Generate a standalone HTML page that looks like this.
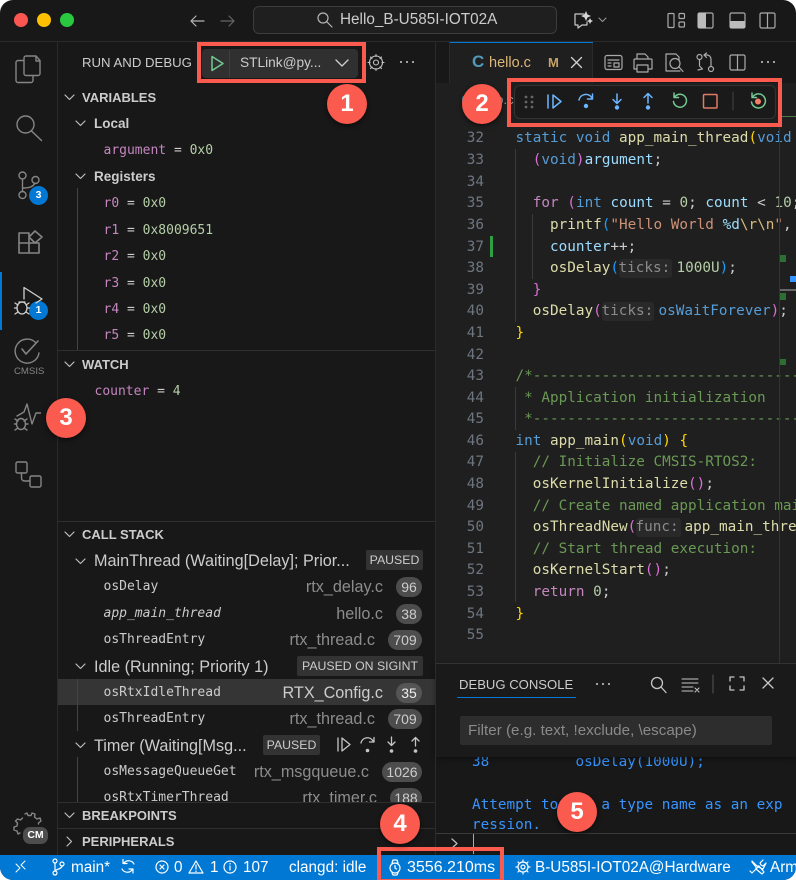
<!DOCTYPE html>
<html><head><meta charset="utf-8"><style>
html,body{margin:0;padding:0;background:#fff}
#w{position:relative;width:796px;height:880px;overflow:hidden;background:#181818;border-radius:13px;font-family:"Liberation Sans",sans-serif;color:#ccc}
#w div{position:absolute}
.t{white-space:nowrap;line-height:20px;height:20px}
.m{font-family:"DejaVu Sans Mono",monospace;font-size:13px;line-height:20px;height:20px;white-space:nowrap}
.c{font-family:"DejaVu Sans Mono",monospace;font-size:14.33px;line-height:20px;height:20px;white-space:pre;left:515.5px;color:#ccc}
.n{font-family:"DejaVu Sans Mono",monospace;font-size:14.33px;line-height:20px;height:20px;left:440px;width:44px;text-align:right;color:#6e7681}
.h{font-weight:bold;font-size:13px;color:#ccc;left:82px}
.s{font-size:16.2px;color:#ccc;left:94px}
.v{color:#c586c0}.u{color:#b5cea8}
.f{font-size:16.2px;color:#8c8c8c;text-align:right;width:200px}
.p{background:#4d4d4d;border-radius:11px;height:20px;line-height:20px;font-size:14px;text-align:center;color:#ccc}
.b{background:#333;border-radius:2px;height:20px;line-height:20px;font-size:12.3px;text-align:center;color:#ccc}
.k{color:#569cd6}.y{color:#dcdcaa}.a{color:#9cdcfe}.q{color:#b5cea8}.r{color:#ce9178}.g{color:#6a9955}.o{color:#ffd700}.l{color:#da70d6}.e{color:#179fff}.x{color:#c586c0}.d{color:#d7ba7d}
.i{position:absolute;background:#292929;color:#8b8b8b;border-radius:3px;height:19px;line-height:19px;top:1px}
.rb{border:4px solid #fb5a4e;box-sizing:border-box}
.o1{width:40px;height:40px;border-radius:50%;background:#fb5a4e;color:#fff;font-size:24px;font-weight:bold;text-align:center;line-height:40px;box-shadow:0 2px 5px rgba(0,0,0,.55)}
.st{color:#fff;font-size:15.3px;top:858px}
</style></head><body><div id="w">

<!-- editor -->
<div style="left:436px;top:42px;width:360px;height:813px;background:#1f1f1f"></div>
<div style="left:436px;top:42px;width:360px;height:41px;background:#181818"></div>
<div style="left:450px;top:42px;width:143px;height:41px;background:#1f1f1f;border-right:1px solid #2b2b2b;box-sizing:border-box"></div>
<div style="left:450px;top:42px;width:143px;height:1px;background:#0078d4"></div>
<div style="left:449px;top:42px;width:1px;height:41px;background:#2b2b2b"></div>

<div class="t" style="left:472px;top:52px;font-size:17px;font-weight:bold;color:#519aba">C</div>
<div class="t" style="left:489px;top:53px;font-size:14.5px;color:#dcb67a">hello.c</div>
<div class="t" style="left:548px;top:53px;font-size:13px;font-weight:bold;color:#c4a269">M</div>

<div style="left:462px;top:95px;width:9px;height:11px;background:#519aba;border-radius:4px"></div>
<div class="t" style="left:476px;top:90px;font-size:13px;color:#999">hello.c</div>

<div class="n" style="top:128px">32</div><div class="c" style="top:128px"><span class="k">static void</span> <span class="y">app_main_thread</span><span class="o">(</span><span class="k">void</span></div>
<div class="n" style="top:150px">33</div><div class="c" style="top:150px">  <span class="l">(</span><span class="k">void</span><span class="l">)</span><span class="a">argument</span>;</div>
<div class="n" style="top:172px">34</div>
<div class="n" style="top:193px">35</div><div class="c" style="top:193px">  <span class="x">for</span> <span class="l">(</span><span class="k">int</span> <span class="a">count</span> = <span class="q">0</span>; <span class="a">count</span> &lt; <span class="q">10</span>;</div>
<div class="n" style="top:215px">36</div><div class="c" style="top:215px">    <span class="y">printf</span><span class="e">(</span><span class="r">"Hello World </span><span class="a">%d</span><span class="d">\r\n</span><span class="r">"</span>,</div>
<div class="n" style="top:237px">37</div><div class="c" style="top:237px">    <span class="a">counter</span>++;</div>
<div class="n" style="top:258px">38</div><div class="c" style="top:258px">    <span class="y">osDelay</span><span class="e">(</span><span class="i" style="left:103px;width:53px">ticks:</span><span style="position:absolute;left:161px"><span class="q">1000U</span><span class="e">)</span>;</span></div>
<div class="n" style="top:280px">39</div><div class="c" style="top:280px">  <span class="l">}</span></div>
<div class="n" style="top:301px">40</div><div class="c" style="top:301px">  <span class="y">osDelay</span><span class="l">(</span><span class="i" style="left:86px;width:52px">ticks:</span><span style="position:absolute;left:143px"><span class="k">osWaitForever</span><span class="l">)</span>;</span></div>
<div class="n" style="top:323px">41</div><div class="c" style="top:323px"><span class="o">}</span></div>
<div class="n" style="top:345px">42</div>
<div class="n" style="top:366px">43</div><div class="c" style="top:366px"><span class="g">/*-----------------------------------</span></div>
<div class="n" style="top:388px">44</div><div class="c" style="top:388px"><span class="g"> * Application initialization</span></div>
<div class="n" style="top:409px">45</div><div class="c" style="top:409px"><span class="g"> *----------------------------------</span></div>
<div class="n" style="top:431px">46</div><div class="c" style="top:431px"><span class="k">int</span> <span class="y">app_main</span><span class="o">(</span><span class="k">void</span><span class="o">)</span> <span class="o">{</span></div>
<div class="n" style="top:452px">47</div><div class="c" style="top:452px">  <span class="g">// Initialize CMSIS-RTOS2:</span></div>
<div class="n" style="top:474px">48</div><div class="c" style="top:474px">  <span class="y">osKernelInitialize</span><span class="l">()</span>;</div>
<div class="n" style="top:496px">49</div><div class="c" style="top:496px">  <span class="g">// Create named application main</span></div>
<div class="n" style="top:517px">50</div><div class="c" style="top:517px">  <span class="y">osThreadNew</span><span class="l">(</span><span class="i" style="left:120px;width:45px">func:</span><span style="position:absolute;left:169px"><span class="y">app_main_thread</span></span></div>
<div class="n" style="top:539px">51</div><div class="c" style="top:539px">  <span class="g">// Start thread execution:</span></div>
<div class="n" style="top:560px">52</div><div class="c" style="top:560px">  <span class="y">osKernelStart</span><span class="l">()</span>;</div>
<div class="n" style="top:582px">53</div><div class="c" style="top:582px">  <span class="x">return</span> <span class="q">0</span>;</div>
<div class="n" style="top:604px">54</div><div class="c" style="top:604px"><span class="o">}</span></div>
<div class="n" style="top:625px">55</div>

<div style="left:779px;top:120px;width:1px;height:543px;background:#333"></div>
<div style="left:515px;top:149px;width:1px;height:173px;background:#3a3a3a"></div>
<div style="left:515px;top:387px;width:1px;height:43px;background:#3a3a3a"></div>
<div style="left:515px;top:452px;width:1px;height:150px;background:#3a3a3a"></div>
<div style="left:532px;top:214px;width:1px;height:65px;background:#3a3a3a"></div>
<div style="left:490px;top:236px;width:3px;height:21px;background:#2ea043"></div>
<div style="left:780px;top:255px;width:6px;height:7px;background:#2c6e34"></div>
<div style="left:790px;top:276px;width:6px;height:6px;background:#3794ff"></div>
<div style="left:780px;top:289px;width:16px;height:2px;background:#666"></div>
<div style="left:780px;top:293px;width:6px;height:7px;background:#2c6e34"></div>
<div style="left:780px;top:359px;width:6px;height:6px;background:#2c6e34"></div>
<div style="left:780px;top:116px;width:16px;height:1px;background:#4e7a47"></div>

<!-- sidebar -->
<div class="t" style="left:82px;top:53px;font-size:13.2px;color:#ccc">RUN AND DEBUG</div>
<div class="t h" style="top:88px">VARIABLES</div>
<div class="t" style="left:94px;top:114px;font-size:13.5px;font-weight:bold;color:#ccc">Local</div>
<div class="m" style="left:103.5px;top:141px"><span class="v">argument</span> = <span class="u">0x0</span></div>
<div class="t" style="left:94px;top:167px;font-size:13.5px;font-weight:bold;color:#ccc">Registers</div>
<div class="m" style="left:103.5px;top:194px"><span class="v">r0</span> = <span class="u">0x0</span></div>
<div class="m" style="left:103.5px;top:221px"><span class="v">r1</span> = <span class="u">0x8009651</span></div>
<div class="m" style="left:103.5px;top:247px"><span class="v">r2</span> = <span class="u">0x0</span></div>
<div class="m" style="left:103.5px;top:274px"><span class="v">r3</span> = <span class="u">0x0</span></div>
<div class="m" style="left:103.5px;top:300px"><span class="v">r4</span> = <span class="u">0x0</span></div>
<div class="m" style="left:103.5px;top:326px"><span class="v">r5</span> = <span class="u">0x0</span></div>
<div style="left:77px;top:188px;width:1px;height:163px;background:#444"></div>
<div style="left:58px;top:350px;width:377px;height:1px;background:#2f2f2f"></div>
<div class="t h" style="top:355px">WATCH</div>
<div class="m" style="left:94.5px;top:382px"><span class="v">counter</span> = <span class="u">4</span></div>
<div style="left:58px;top:521px;width:377px;height:1px;background:#2f2f2f"></div>
<div class="t h" style="top:525px">CALL STACK</div>

<div style="left:58px;top:538px;width:377px;height:264px;overflow:hidden">
  <div style="left:0;top:141px;width:377px;height:26px;background:#353535"></div>
  <div style="left:19px;top:141px;width:1px;height:52px;background:#444"></div>
  <div style="left:19px;top:219px;width:1px;height:50px;background:#444"></div>
  <div class="t s" style="left:36px;top:13px">MainThread (Waiting[Delay]; Prior...</div>
  <div class="b" style="left:308px;top:12px;width:57px">PAUSED</div>
  <div class="m" style="left:45.5px;top:39px;color:#ccc">osDelay</div>
  <div class="t f" style="left:125px;top:39px">rtx_delay.c</div>
  <div class="p" style="left:338px;top:39px;width:26px">96</div>
  <div class="m" style="left:45.5px;top:66px;color:#ccc;font-style:italic">app_main_thread</div>
  <div class="t f" style="left:125px;top:66px">hello.c</div>
  <div class="p" style="left:338px;top:66px;width:26px">38</div>
  <div class="m" style="left:45.5px;top:92px;color:#ccc">osThreadEntry</div>
  <div class="t f" style="left:117px;top:92px">rtx_thread.c</div>
  <div class="p" style="left:330px;top:92px;width:34px">709</div>
  <div class="t s" style="left:36px;top:119px">Idle (Running; Priority 1)</div>
  <div class="b" style="left:239px;top:118px;width:126px">PAUSED ON SIGINT</div>
  <div class="m" style="left:45.5px;top:145px;color:#ccc">osRtxIdleThread</div>
  <div class="t f" style="left:125px;top:145px;color:#ccc">RTX_Config.c</div>
  <div class="p" style="left:338px;top:145px;width:26px;background:#555;color:#eee">35</div>
  <div class="m" style="left:45.5px;top:171px;color:#ccc">osThreadEntry</div>
  <div class="t f" style="left:117px;top:171px">rtx_thread.c</div>
  <div class="p" style="left:330px;top:171px;width:34px">709</div>
  <div class="t s" style="left:36px;top:198px">Timer (Waiting[Msg...</div>
  <div class="b" style="left:205px;top:197px;width:57px">PAUSED</div>
  <div class="m" style="left:45.5px;top:224px;color:#ccc">osMessageQueueGet</div>
  <div class="t f" style="left:111px;top:224px">rtx_msgqueue.c</div>
  <div class="p" style="left:324px;top:224px;width:40px">1026</div>
  <div class="m" style="left:45.5px;top:250px;color:#ccc">osRtxTimerThread</div>
  <div class="t f" style="left:119px;top:250px">rtx_timer.c</div>
  <div class="p" style="left:332px;top:250px;width:32px">188</div>
</div>
<div style="left:58px;top:802px;width:377px;height:27px;background:#181818"></div>
<div style="left:58px;top:802px;width:377px;height:1px;background:#2f2f2f"></div>
<div class="t h" style="top:806px">BREAKPOINTS</div>
<div style="left:58px;top:828px;width:377px;height:1px;background:#2f2f2f"></div>
<div class="t h" style="top:832px">PERIPHERALS</div>

<!-- debug console -->
<div style="left:436px;top:663px;width:360px;height:192px;background:#181818"></div>
<div class="c" style="left:472px;top:752px;color:#3794ff">38          osDelay(1000U);</div>
<div class="c" style="left:472px;top:795px;color:#3794ff">Attempt to use a type name as an exp</div>
<div class="c" style="left:472px;top:815px;color:#3794ff">ression.</div>
<div style="left:436px;top:663px;width:360px;height:94px;background:#1a1a1a;box-shadow:0 2px 5px rgba(0,0,0,.4)"></div>
<div style="left:436px;top:663px;width:360px;height:1px;background:#333"></div>
<div class="t" style="left:459px;top:675px;font-size:13.1px;color:#ccc">DEBUG CONSOLE</div>
<div style="left:457px;top:697px;width:119px;height:1px;background:#0078d4"></div>
<div style="left:460px;top:716px;width:312px;height:29px;background:#2d2d2d;border-radius:2px"></div>
<div class="t" style="left:468px;top:721px;font-size:15.2px;color:#8a8a8a">Filter (e.g. text, !exclude, \escape)</div>
<div style="left:436px;top:833px;width:360px;height:1px;background:#3a3a3a"></div>
<div style="left:473px;top:834px;width:1px;height:20px;background:#aaa"></div>

<!-- title -->
<div style="left:0;top:41px;width:796px;height:1px;background:#2b2b2b"></div>
<div style="left:57px;top:42px;width:1px;height:813px;background:#2b2b2b"></div>
<div style="left:435px;top:42px;width:1px;height:813px;background:#2b2b2b"></div>
<div style="left:253px;top:6px;width:304px;height:28px;background:#1f1f1f;border:1px solid #3c3c3c;border-radius:6px;box-sizing:border-box"></div>
<div class="t" style="left:340px;top:10px;font-size:15.3px;color:#ccc">Hello_B-U585I-IOT02A</div>

<!-- run button -->
<div style="left:202px;top:49px;width:156px;height:29px;background:#303030;border-radius:4px"></div>
<div style="left:229px;top:50px;width:1px;height:27px;background:#3f3f3f"></div>
<div class="t" style="left:240px;top:53px;font-size:13.7px;color:#ccc">STLink@py...</div>

<!-- debug toolbar -->
<div style="left:514px;top:85px;width:262px;height:34px;background:#1a1a1a;border:1px solid #333;border-radius:6px;box-sizing:border-box"></div>

<!-- status bar -->
<div style="left:0;top:855px;width:796px;height:25px;background:#0078d4"></div>
<div class="t st" style="left:71px">main*</div>
<div class="t st" style="left:174px">0</div>
<div class="t st" style="left:210px">1</div>
<div class="t st" style="left:243px">107</div>
<div class="t st" style="left:289px">clangd: idle</div>
<div class="t st" style="left:407px;font-size:16px">3556.210ms</div>
<div class="t st" style="left:535px">B-U585I-IOT02A@Hardware</div>
<div class="t st" style="left:770px">Arm</div>

<!-- activity badges -->
<div style="left:29px;top:186px;width:19px;height:19px;border-radius:50%;background:#0078d4;color:#fff;font-size:10.5px;font-weight:bold;text-align:center;line-height:19px">3</div>
<div style="left:29px;top:301px;width:19px;height:19px;border-radius:50%;background:#0078d4;color:#fff;font-size:10.5px;font-weight:bold;text-align:center;line-height:19px">1</div>
<div class="t" style="left:14px;top:362px;font-size:9.6px;color:#858585">CMSIS</div>
<div style="left:23px;top:827px;width:25px;height:17px;border-radius:7px;background:#4d4d4d;color:#fff;font-size:10.5px;font-weight:bold;text-align:center;line-height:17px">CM</div>
<div style="left:0;top:272px;width:2px;height:58px;background:#0078d4"></div>

<!-- icons -->
<svg width="796" height="880" viewBox="0 0 796 880" style="position:absolute;left:0;top:0" fill="none" stroke-linecap="round" stroke-linejoin="round">
<circle cx="21" cy="20" r="7" fill="#fc5652"/><circle cx="44" cy="20" r="7" fill="#fdc002"/><circle cx="67" cy="20" r="7" fill="#2ac840"/>
<g stroke="#b5b5b5" stroke-width="1.2"><path d="M204 21H191M196 16l-5 5 5 5"/></g>
<g stroke="#666" stroke-width="1.2"><path d="M221 21h13M229 16l5 5-5 5"/></g>
<g stroke="#b5b5b5" stroke-width="1.2"><circle cx="323" cy="18" r="5"/><path d="M327 22l5 5"/></g>

<!-- copilot -->
<g stroke="#c8c8c8" stroke-width="1.2"><path d="M584 14h-9v11h3v3l4-3h5v-3"/></g>
<path d="M586 11l1.500 3.500 3.500 1.500-3.500 1.500-1.500 3.500-1.500-3.500-3.500-1.500 3.500-1.500zM590 18l1 2 2 1-2 1-1 2-1-2-2-1 2-1z" fill="#d5d5d5"/>
<path d="M599 18l3.500 3.500 3.500-3.500" stroke="#999" stroke-width="1"/>
<g stroke="#aaa" stroke-width="1.2"><rect x="668" y="13.500" width="6" height="14" rx="1"/><rect x="679" y="13.500" width="5.500" height="5" rx="1"/><rect x="679" y="22" width="5.500" height="5" rx="1"/>
<rect x="698" y="13" width="15" height="15" rx="1.500"/><rect x="730" y="13" width="15" height="15" rx="1.500"/><rect x="760" y="13" width="15" height="15" rx="1.500"/><path d="M767.500 13v15"/></g>
<rect x="698" y="13" width="8" height="15" fill="#bbb"/><rect x="730" y="21" width="15" height="7" fill="#bbb"/>

<!-- tab x and actions -->
<g stroke="#d0d0d0" stroke-width="1.300"><path d="M571.500 57.500l10 10M581.500 57.500l-10 10"/></g>
<g stroke="#aaa" stroke-width="1.200">
<rect x="605" y="55.500" width="17" height="14" rx="2"/><path d="M608 60h11M608 66h3M614 63h5v4h-5zM608 63h3" />
<path d="M637 59v-5h8l3 3v2M637 69h-3v-9a1 1 0 0 1 1-1h16a1 1 0 0 1 1 1v9h-3M637 65h11v7h-11z"/>
<path d="M680 71h-14V54h10l3 3v3"/><circle cx="675" cy="63.500" r="5"/><path d="M679 67l4 4.500"/>
<circle cx="699.500" cy="57" r="2.500"/><circle cx="711" cy="69" r="2.500"/><path d="M699.500 60v6l3 3M698 70l4-1M704 55h3a4 4 0 0 1 4 4v7M704 55l2.500-2M704 55l2.500 2.500"/>
<rect x="730" y="55" width="15" height="15" rx="1.500"/><path d="M737.500 55v15"/></g>
<g fill="#ccc"><circle cx="762" cy="62" r="1"/><circle cx="768" cy="62" r="1"/><circle cx="774" cy="62" r="1"/>
<circle cx="401" cy="62" r="1"/><circle cx="407" cy="62" r="1"/><circle cx="413" cy="62" r="1"/>
<circle cx="597" cy="684" r="1"/><circle cx="603" cy="684" r="1"/><circle cx="609" cy="684" r="1"/></g>

<!-- run -->
<path d="M212 56.500v14l11-7z" stroke="#73c991" stroke-width="1.500"/>
<path d="M336 60l6 6 6-6" stroke="#ccc" stroke-width="1.400"/>
<g stroke="#c5c5c5" stroke-width="1.100"><circle cx="376" cy="62.500" r="2.500"/><circle cx="376" cy="62.500" r="6.500"/><path d="M376 54.500v2M376 68.500v2M368 62.500h2M382 62.500h2M370.500 57l1.500 1.500M380 67l1.500 1.500M381.500 57l-1.500 1.500M372 67l-1.500 1.500"/></g>

<!-- chevrons -->
<g stroke="#bdbdbd" stroke-width="1.200">
<path d="M65 95l4.500 4.500L74 95M76 121l4.500 4.500 4.500-4.500M76 174l4.500 4.500 4.500-4.500M65 362l4.500 4.500 4.500-4.500M65 532l4.500 4.500 4.500-4.500M76 559l4.500 4.500 4.500-4.500M76 664l4.500 4.500 4.500-4.500M76 743l4.500 4.500 4.500-4.500M65 813l4.500 4.500 4.500-4.500M67 837l4.500 4.500-4.500 4.500"/>
</g>

<!-- debug toolbar -->
<g fill="#666"><circle cx="526" cy="97" r="1.400"/><circle cx="532" cy="97" r="1.400"/><circle cx="526" cy="102" r="1.400"/><circle cx="532" cy="102" r="1.400"/><circle cx="526" cy="107" r="1.400"/><circle cx="532" cy="107" r="1.400"/></g>
<g stroke="#6cb6ff" stroke-width="1.500">
<path d="M548 95v13M553 95v13l8-6.500z"/>
<path d="M579 100a7 7 0 0 1 13-2M592.500 94v5h-5"/>
<path d="M617 94v9M613 99.500l4 4 4-4"/>
<path d="M648 103v-9M644 97.500l4-4 4 4"/>
</g>
<g fill="#6cb6ff"><circle cx="586" cy="106" r="2.200"/><circle cx="617" cy="107.500" r="2.200"/><circle cx="648" cy="107.500" r="2.200"/></g>
<g stroke="#73c991" stroke-width="1.500"><path d="M675 96.500a6.500 6.500 0 1 1-1.500 5M674 93v4.500h4.500"/>
<path d="M753 96.500a7 7 0 1 1-1.500 5.500M752 93v4.500h4.500"/></g>
<rect x="703.500" y="94.500" width="13.500" height="13.500" rx="1" stroke="#e07a66" stroke-width="1.500"/>
<circle cx="758" cy="101.500" r="3" fill="#f47c68"/>
<path d="M733 92v18" stroke="#444" stroke-width="1"/>

<!-- activity bar -->
<g stroke="#858585" stroke-width="1.400">
<path d="M23 60.500h-5a2 2 0 0 0-2 2v18a2 2 0 0 0 2 2h13a2 2 0 0 0 2-2v-4"/>
<path d="M26 56h10l4 4.500v13a2 2 0 0 1-2 2H26a2 2 0 0 1-2-2V58a2 2 0 0 1 2-2zM36 56v5h4"/>
<circle cx="25.500" cy="124.500" r="8.500"/><path d="M31.500 131l10 9.500" stroke-width="1.500"/>
<circle cx="22.500" cy="175.500" r="3.500"/><circle cx="35.500" cy="180" r="3.500"/><circle cx="22.500" cy="195" r="3.500"/><path d="M22.500 179v12.500M23 188c6 0 10-1 12-5"/>
<path d="M19 233h10v10H19zM19 243h10v10H19zM29 243h10v10H29zM29 237l6-6 7 6-7 6z" stroke-width="1.600"/>
</g>
<g stroke="#d0d0d0" stroke-width="1.300">
<path d="M24 299v-11.500l18 11.500-6 4"/>
<ellipse cx="22" cy="308" rx="5" ry="6"/><path d="M15 303l3 2M29 303l-3 2M14.500 308H17M27 308h2.500M15 314l3-2M29 314l-3-2M19 302h6"/>
</g>
<g stroke="#858585" stroke-width="1.400">
<path d="M36 343a12 12 0 1 0 3 10"/><path d="M22 349l4 5 12-13" stroke-width="1.600"/>
<ellipse cx="21" cy="424" rx="4.500" ry="5.500"/><path d="M15 419l3 2M27 419l-3 2M14.500 424H16.500M25.500 424H28M15 430l3-2M27 430l-3-2"/>
<path d="M17 416l7-4 3-8 5 20 4-11h4.500"/>
<rect x="16" y="462" width="11" height="11" rx="1.500"/><rect x="30" y="476" width="11" height="11" rx="1.500"/><path d="M21.500 473v5a3 3 0 0 0 3 3H30"/>
<path d="M25 814l2-1 1 2.500h3l1-2.500 3 1-.5 3 2.500 2 3-1 1 3-2.500 2v1M20 833l-2 1-1-3-3-1v-3l3-1 .5-3-2-2 2-2 3 1 2-2"/>
</g>

<!-- call stack inline -->
<g stroke="#c5c5c5" stroke-width="1.300">
<path d="M338 738v13M342 738v13l8-6.500z"/>
<path d="M361 743a6.500 6.500 0 0 1 12-2M374 737.500v4.500h-4.500"/>
<path d="M391.500 737v8M388 742l3.500 3.500L395 742"/>
<path d="M415.500 746v-8M412 741l3.500-3.500L419 741"/>
</g>
<g fill="#c5c5c5"><circle cx="367.500" cy="750.500" r="1.800"/><circle cx="391.500" cy="751" r="1.800"/><circle cx="415.500" cy="751" r="1.800"/></g>

<!-- panel -->
<g stroke="#c5c5c5" stroke-width="1.300"><circle cx="657" cy="683" r="5.500"/><path d="M661 687l5 5.500"/>
<path d="M682 679h16M682 683h16M682 687h11M682 691h11M695 688l4 4M699 688l-4 4" stroke-width="1"/>
<path d="M730 681v-4h4M740 677h4v4M744 686v4h-4M734 690h-4v-4"/><path d="M763 678l10 10M773 678l-10 10"/></g>
<path d="M713 675v18" stroke="#555"/>
<path d="M452 839l5 4.500-5 4.500" stroke="#bbb" stroke-width="1.300"/>

<!-- status icons -->
<g stroke="#fff" stroke-width="1.200">
<path d="M16 864l4 4-4 4M25 861l-4 4 4 4" stroke-width="1"/>
<circle cx="55" cy="861" r="2"/><circle cx="62" cy="864" r="2"/><circle cx="55" cy="873" r="2"/><path d="M55 863v8M62 866c0 3-6 3-7 5"/>
<path d="M134 864a6 6 0 0 0-10-1M122 869a6 6 0 0 0 10 1M123 859.500v4h4M133 873v-4h-4"/>
<circle cx="162" cy="867" r="6"/><path d="M160 865l4 4M164 865l-4 4"/>
<path d="M196 861l7 12h-14zM196 865v4M196 871v.5"/>
<circle cx="230" cy="867" r="6"/><path d="M230 866v4M230 863.500v.5"/>
<circle cx="395" cy="868" r="5"/><path d="M392 863l1-3h4l1 3M392 873l1 2h4l1-2M395 865.500v2.500l1.500 1"/>
<circle cx="523" cy="867" r="2"/><circle cx="523" cy="867" r="5"/><path d="M523 860v2M523 872v2M516 867h2M528 867h2M518 862l1.500 1.500M526.500 870.500L528 872M528 862l-1.500 1.500M519.500 870.500L518 872"/>
<path d="M752 861l5 5 2 0 5 6-2 2-6-5v-2l-4-5M763 860l-3 3 1 2 2 1 3-3-3 6-5-2-6 6-2-2"/>
</g>
</svg>

<!-- annotations -->
<div class="rb" style="left:197px;top:42px;width:169px;height:41px"></div>
<div class="rb" style="left:507px;top:78px;width:275px;height:49px"></div>
<div class="rb" style="left:377px;top:847px;width:127px;height:36px"></div>
<div class="o1" style="left:327px;top:84px">1</div>
<div class="o1" style="left:462px;top:84px">2</div>
<div class="o1" style="left:46px;top:398px">3</div>
<div class="o1" style="left:380px;top:804px">4</div>
<div class="o1" style="left:557px;top:792px">5</div>
</div></body></html>
